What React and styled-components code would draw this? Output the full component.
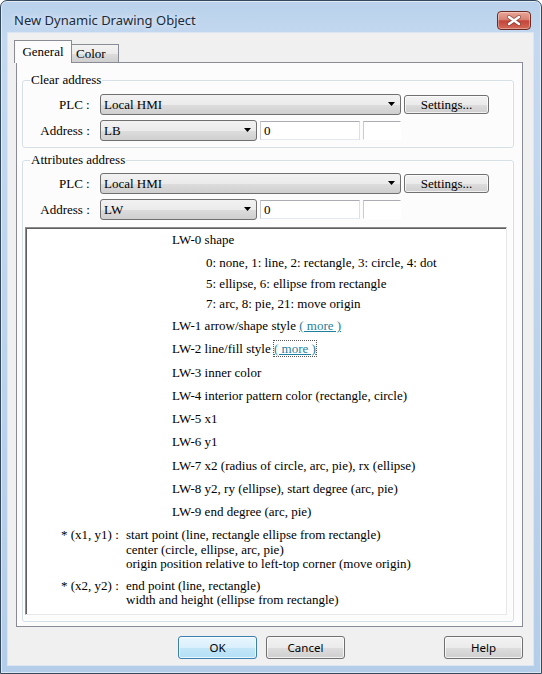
import React from "react";
import styled, { createGlobalStyle } from "styled-components";

const serif = `"Liberation Serif", "DejaVu Serif", "Times New Roman", serif`;
const sans = `"Noto Sans", "Open Sans", "DejaVu Sans", sans-serif`;

const GlobalStyle = createGlobalStyle`
  html, body {
    margin: 0;
    padding: 0;
  }
  body {
    background: #ffffff;
    font-family: ${serif};
    color: #000;
  }
  * {
    box-sizing: border-box;
  }
`;

/* Window frame */
const Window = styled.div`
  width: 542px;
  height: 674px;
  display: flex;
  flex-direction: column;
  font-family: ${serif};
  border: 1px solid #34495e;
  border-radius: 7px 7px 0 0;
  background: linear-gradient(180deg, #b9d1eb 0%, #c4d9f0 40px, #b4cde8 100%);
  box-shadow: inset 0 0 0 1px rgba(255, 255, 255, 0.55);
  overflow: hidden;
`;

const TitleBar = styled.div`
  height: 32px;
  flex: none;
  display: flex;
  align-items: flex-start;
  padding: 10px 10px 0 13px;
`;

const Title = styled.div`
  flex: 1;
  font-family: ${sans};
  font-size: 13px;
  line-height: 19px;
  color: #1c2b3d;
  text-shadow: 0 0 6px rgba(255, 255, 255, 0.9);
`;

const CloseButton = styled.div`
  width: 34px;
  height: 19px;
  display: flex;
  align-items: center;
  justify-content: center;
  border: 1px solid #6b2a22;
  border-radius: 4px;
  background: linear-gradient(180deg, #e9a698 0%, #d98273 45%, #c5453a 52%, #d26a58 100%);
  box-shadow: inset 0 0 0 1px rgba(255, 255, 255, 0.35);
`;

const Client = styled.div`
  flex: 1;
  display: flex;
  flex-direction: column;
  margin: 0 8px 8px 7px;
  padding: 7px 10px 6px 8px;
  background: #f0f0f0;
  box-shadow: 0 0 0 1px #dbe6f2;
`;

/* Tabs */
const TabStrip = styled.div`
  display: flex;
  align-items: flex-start;
  height: 23px;
  margin-bottom: -1px;
  position: relative;
  z-index: 1;
`;

const Tab = styled.div`
  font-family: ${serif};
  font-size: 13px;
  border: 1px solid #898c95;
  ${(p) =>
    p.$active
      ? `
    height: 23px;
    width: 58px;
    margin-left: -2px;
    margin-top: 0;
    border-bottom: none;
    background: #fcfcfc;
    text-align: center;
    line-height: 21px;
    position: relative;
    z-index: 2;
  `
      : `
    height: 18px;
    width: 48px;
    margin-left: -1px;
    margin-top: 4px;
    border-bottom: none;
    padding-left: 4px;
    line-height: 17px;
    background: linear-gradient(180deg, #f3f3f3 0%, #ebebeb 50%, #dddddd 51%, #cfcfcf 100%);
  `}
`;

const Panel = styled.div`
  flex: 1;
  display: flex;
  flex-direction: column;
  background: #fcfcfc;
  border: 1px solid #898c95;
  padding: 10px 8px 4px 5px;
`;

/* Group boxes */
const GroupBox = styled.fieldset`
  margin: 0 0 ${(p) => (p.$grow ? 0 : 5)}px 0;
  min-width: 0;
  border: 1px solid #d5dfe5;
  border-radius: 3px;
  box-shadow: inset 0 0 0 1px #ffffff;
  padding: ${(p) => p.$pad};
  display: flex;
  flex-direction: column;
  gap: 5px;
  font-family: ${serif};
  ${(p) => p.$grow && "flex: 1;"}
`;

const Legend = styled.legend`
  margin-left: 5px;
  padding: 0 1px;
  font-family: ${serif};
  font-size: 13px;
  line-height: 14px;
`;

const Row = styled.div`
  display: flex;
  align-items: center;
  height: 21px;
  flex: none;
`;

const FieldLabel = styled.div`
  width: 68px;
  margin-right: 7px;
  text-align: right;
  font-size: 13px;
  white-space: pre;
`;

const Combo = styled.div`
  width: ${(p) => p.$w}px;
  height: 21px;
  display: flex;
  align-items: center;
  justify-content: space-between;
  padding: 0 4px 0 3px;
  border: 1px solid #707070;
  border-radius: 3px;
  background: linear-gradient(180deg, #f2f2f2 0%, #ebebeb 50%, #dddddd 51%, #cfcfcf 100%);
  font-size: 13px;
`;

const PushButton = styled.div`
  width: 85px;
  height: 19px;
  margin-left: 3px;
  display: flex;
  align-items: center;
  justify-content: center;
  border: 1px solid #707070;
  border-radius: 3px;
  background: linear-gradient(180deg, #f2f2f2 0%, #ebebeb 50%, #dddddd 51%, #cfcfcf 100%);
  box-shadow: inset 0 0 0 1px rgba(255, 255, 255, 0.7);
  font-size: 13px;
`;

const TextBox = styled.div`
  width: ${(p) => p.$w}px;
  height: 19px;
  margin-left: 3px;
  padding-left: 3px;
  background: #ffffff;
  border: 1px solid;
  border-color: #abadb3 ${(p) => (p.$open ? "transparent" : "#dbdfe6")}
    ${(p) => (p.$open ? "transparent" : "#e3e9ef")} #c8cbd2;
  font-size: 13px;
  line-height: 17px;
`;

/* Description */
const DescBox = styled.div`
  flex: 1;
  margin-top: 2px;
  background: #ffffff;
  border: 1px solid;
  border-color: #8c8c8c #e8e8e8 #e8e8e8 #8c8c8c;
  box-shadow: inset 1px 1px 0 #5e5e5e;
  font-family: ${serif};
  font-size: 13px;
`;

const EntryList = styled.div`
  padding-left: 146px;
`;

const Entry = styled.div`
  line-height: 23.25px;
  white-space: nowrap;
`;

const SubList = styled.div`
  padding-left: 34px;
  margin-top: 2px;
`;

const SubItem = styled.div`
  line-height: 20.3px;
  white-space: nowrap;
`;

const MoreLink = styled.span`
  color: #1f7fa0;
  text-decoration: underline;
  ${(p) => p.$focused && "outline: 1px dotted #555; outline-offset: 0;"}
`;

const Note = styled.div`
  display: grid;
  grid-template-columns: 65px 1fr;
  padding-left: 35px;
  margin-top: ${(p) => p.$top}px;
  line-height: 14.5px;
  white-space: nowrap;
`;

/* Dialog buttons */
const ButtonRow = styled.div`
  display: flex;
  gap: 9px;
  height: 23px;
  margin-top: 9px;
  padding-left: 162px;
`;

const DialogButton = styled.div`
  width: 79px;
  height: 23px;
  display: flex;
  align-items: center;
  justify-content: center;
  font-family: ${sans};
  font-size: 11.5px;
  border-radius: 3px;
  border: 1px solid ${(p) => (p.$default ? "#3c7fb1" : "#707070")};
  background: ${(p) =>
    p.$default
      ? "linear-gradient(180deg, #eaf6fd 0%, #d9f0fc 50%, #c2e6f8 51%, #b3dff5 100%)"
      : "linear-gradient(180deg, #f2f2f2 0%, #ebebeb 50%, #dddddd 51%, #cfcfcf 100%)"};
  box-shadow: inset 0 0 0 1px rgba(255, 255, 255, 0.7);
  ${(p) => p.$push && "margin-left: auto;"}
`;

function DownArrow() {
  return (
    <svg width="8" height="5" viewBox="0 0 8 5">
      <polygon points="0,0 7,0 3.5,4" fill="#000" />
    </svg>
  );
}

function CloseGlyph() {
  return (
    <svg width="14" height="11" viewBox="0 0 14 11">
      <path d="M2 2 L12 9 M12 2 L2 9" stroke="#6a2a22" strokeWidth="4" strokeLinecap="round" opacity="0.55" />
      <path d="M2 2 L12 9 M12 2 L2 9" stroke="#ffffff" strokeWidth="2.4" strokeLinecap="round" />
    </svg>
  );
}

function AddressGroup({ title, device, pad, grow, children }) {
  return (
    <GroupBox $pad={pad} $grow={grow}>
      <Legend>{title}</Legend>
      <Row>
        <FieldLabel>PLC : </FieldLabel>
        <Combo $w={301}>
          <span>Local HMI</span>
          <DownArrow />
        </Combo>
        <PushButton>Settings...</PushButton>
      </Row>
      <Row>
        <FieldLabel>Address : </FieldLabel>
        <Combo $w={157}>
          <span>{device}</span>
          <DownArrow />
        </Combo>
        <TextBox $w={100}>0</TextBox>
        <TextBox $w={38} $open />
      </Row>
      {children}
    </GroupBox>
  );
}

const entries = [
  ["LW-3", "inner color"],
  ["LW-4", "interior pattern color (rectangle, circle)"],
  ["LW-5", "x1"],
  ["LW-6", "y1"],
  ["LW-7", "x2 (radius of circle, arc, pie), rx (ellipse)"],
  ["LW-8", "y2, ry (ellipse), start degree (arc, pie)"],
  ["LW-9", "end degree (arc, pie)"],
];

export default function App() {
  return (
    <>
      <GlobalStyle />
      <Window>
        <TitleBar>
          <Title>New Dynamic Drawing Object</Title>
          <CloseButton>
            <CloseGlyph />
          </CloseButton>
        </TitleBar>
        <Client>
          <TabStrip>
            <Tab $active>General</Tab>
            <Tab>Color</Tab>
          </TabStrip>
          <Panel>
            <AddressGroup title="Clear address" device="LB" pad="7px 8px 6px 2px" />
            <AddressGroup title="Attributes address" device="LW" pad="6px 6px 6px 2px" grow>
              <DescBox>
                <EntryList>
                  <Entry>LW-0 shape</Entry>
                  <SubList>
                    <SubItem>0: none, 1: line, 2: rectangle, 3: circle, 4: dot</SubItem>
                    <SubItem>5: ellipse, 6: ellipse from rectangle</SubItem>
                    <SubItem>7: arc, 8: pie, 21: move origin</SubItem>
                  </SubList>
                  <Entry>
                    LW-1 arrow/shape style <MoreLink>( more )</MoreLink>
                  </Entry>
                  <Entry>
                    LW-2 line/fill style <MoreLink $focused>( more )</MoreLink>
                  </Entry>
                  {entries.map(([code, text]) => (
                    <Entry key={code}>
                      {code} {text}
                    </Entry>
                  ))}
                </EntryList>
                <Note $top={5}>
                  <span>* (x1, y1) :</span>
                  <div>
                    start point (line, rectangle ellipse from rectangle)
                    <br />
                    center (circle, ellipse, arc, pie)
                    <br />
                    origin position relative to left-top corner (move origin)
                  </div>
                </Note>
                <Note $top={7}>
                  <span>* (x2, y2) :</span>
                  <div>
                    end point (line, rectangle)
                    <br />
                    width and height (ellipse from rectangle)
                  </div>
                </Note>
              </DescBox>
            </AddressGroup>
          </Panel>
          <ButtonRow>
            <DialogButton $default>OK</DialogButton>
            <DialogButton>Cancel</DialogButton>
            <DialogButton $push>Help</DialogButton>
          </ButtonRow>
        </Client>
      </Window>
    </>
  );
}
